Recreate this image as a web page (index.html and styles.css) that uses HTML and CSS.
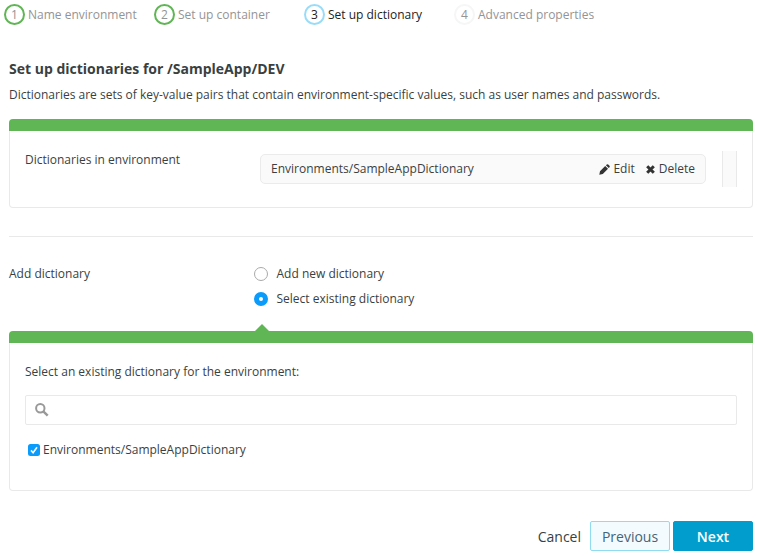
FILE: index.html
```html
<!DOCTYPE html>
<html lang="en">
<head>
<meta charset="utf-8">
<title>Set up dictionary</title>
<link rel="stylesheet" href="styles.css">
</head>
<body>
<ol class="steps">
  <li class="step done"><span class="num">1</span><span>Name environment</span></li>
  <li class="step done"><span class="num">2</span><span>Set up container</span></li>
  <li class="step current"><span class="num">3</span><span>Set up dictionary</span></li>
  <li class="step"><span class="num">4</span><span>Advanced properties</span></li>
</ol>
<main>
  <h1>Set up dictionaries for /SampleApp/DEV</h1>
  <p class="intro">Dictionaries are sets of key-value pairs that contain environment-specific values, such as user names and passwords.</p>

  <section class="panel">
    <div class="panel-body assigned">
      <div class="label">Dictionaries in environment</div>
      <div class="entry">
        <span class="entry-name">Environments/SampleAppDictionary</span>
        <span class="action edit">
          <svg width="11" height="11" viewBox="0 0 11 11"><path fill="#333" d="M.3 10.700L1 7.200L6.200 2l2.800 2.800L3.800 10zM6.900 1.300L7.800.5q.7-.6 1.400 0L10.500 1.800q.6.700 0 1.400L9.700 4.100z"/></svg>
          <span>Edit</span>
        </span>
        <span class="action">
          <svg width="9" height="9" viewBox="0 0 9 9"><path stroke="#333" stroke-width="3" d="M1.200 1.200l6.600 6.600M7.800 1.200L1.200 7.800"/></svg>
          <span>Delete</span>
        </span>
      </div>
      <div class="stub"></div>
    </div>
  </section>

  <hr>

  <div class="add">
    <div class="label">Add dictionary</div>
    <div class="options">
      <div class="option"><span class="radio"></span><span>Add new dictionary</span></div>
      <div class="option"><span class="radio on"></span><span>Select existing dictionary</span></div>
    </div>
  </div>

  <section class="panel pointed">
    <div class="panel-body existing">
      <div class="label">Select an existing dictionary for the environment:</div>
      <div class="search">
        <svg width="14" height="14" viewBox="0 0 14 14" fill="none" stroke="#999"><circle cx="5.300" cy="5.300" r="4.200" stroke-width="2"/><path stroke-width="2.400" d="M8.300 8.300l4.400 4.400"/></svg>
      </div>
      <div class="check-row">
        <svg width="12" height="12" viewBox="0 0 12 12"><rect width="12" height="12" rx="2.500" fill="#0a9bfb"/><path d="M3 6.400l2.100 2.300L9 3.200" fill="none" stroke="#fff" stroke-width="1.600"/></svg>
        <span>Environments/SampleAppDictionary</span>
      </div>
    </div>
  </section>

  <footer>
    <span class="cancel">Cancel</span>
    <span class="btn previous">Previous</span>
    <span class="btn next">Next</span>
  </footer>
</main>
</body>
</html>
```
FILE: styles.css
```css
* { box-sizing: border-box; }
body {
  margin: 0;
  background: #fff;
  color: #3a3f42;
  font: 12px/18px "Open Sans", "Noto Sans", sans-serif;
  white-space: nowrap;
}
svg { display: block; flex: none; }
.steps {
  display: flex;
  list-style: none;
  margin: 0;
  padding: 4px 0 0 4px;
}
.step {
  display: flex;
  align-items: center;
  gap: 3px;
  width: 150px;
  height: 21px;
  color: #949494;
}
.num {
  width: 21px;
  height: 21px;
  border: 2px solid #f6f6f6;
  border-radius: 50%;
  text-align: center;
  line-height: 17px;
}
.done .num { border-color: #60b555; }
.current { color: #222; }
.current .num { border-color: #9adcf8; }
main { padding: 0 5px 0 9px; }
h1 {
  margin: 34px 0 0;
  font-size: 14px;
  line-height: 20px;
}
.intro { margin: 7px 0 15px; }
.panel {
  position: relative;
  border-top: 12px solid #60b555;
  border-radius: 4px 4px 0 0;
}
.panel-body {
  border: 1px solid #e9e9e9;
  border-top: 0;
  border-radius: 0 0 4px 4px;
  padding: 20px 15px 0;
}
.assigned {
  display: flex;
  height: 77px;
}
.assigned .label { width: 235px; }
.entry {
  display: flex;
  align-items: center;
  width: 446px;
  height: 30px;
  margin-top: 3px;
  padding: 0 10px;
  border: 1px solid #ebebeb;
  border-radius: 5px;
  background: #fafafa;
}
.entry-name { flex: 1; }
.action { display: flex; align-items: center; gap: 4px; }
.edit { margin-right: 11px; gap: 3px; }
.stub {
  width: 15px;
  height: 36px;
  margin-left: 16px;
  border: solid #e9e9e9;
  border-width: 0 1px;
  background: #fafafa;
}
hr {
  margin: 28px 0 0;
  border: 0;
  border-top: 1px solid #e9e9e9;
}
.add { display: flex; padding-top: 28px; }
.add .label { width: 245px; }
.options { display: grid; gap: 7px; }
.option { display: flex; align-items: center; gap: 8.5px; }
.radio {
  width: 14px;
  height: 14px;
  border: 1px solid #aaa;
  border-radius: 50%;
}
.radio.on {
  border: 5px solid #0a9bfb;
}
.pointed { margin-top: 23px; }
.existing { height: 148px; }
.pointed::before {
  content: "";
  position: absolute;
  left: 246px;
  top: -19px;
  border: 7px solid transparent;
  border-top: 0;
  border-bottom-color: #60b555;
}
.search {
  height: 30px;
  margin: 14px 0 16px;
  padding: 7px 8.5px;
  border: 1px solid #e9e9e9;
  border-radius: 2px;
}
.check-row { display: flex; align-items: center; gap: 3px; padding-left: 3px; }
footer {
  display: flex;
  justify-content: flex-end;
  margin-top: 30px;
  font-size: 14px;
  line-height: 30px;
}
.cancel { margin-right: 9px; line-height: 32px; height: 30px; }
.btn {
  width: 80px;
  height: 30px;
  border: 1px solid #8fdcf0;
  border-radius: 2px;
  line-height: 29px;
  text-align: center;
}
.previous { margin-right: 3px; background: #f3fbff; color: #456577; }
.next { border-color: #009dcd; background: #009dcd; color: #fff; font-weight: 600; }
```
